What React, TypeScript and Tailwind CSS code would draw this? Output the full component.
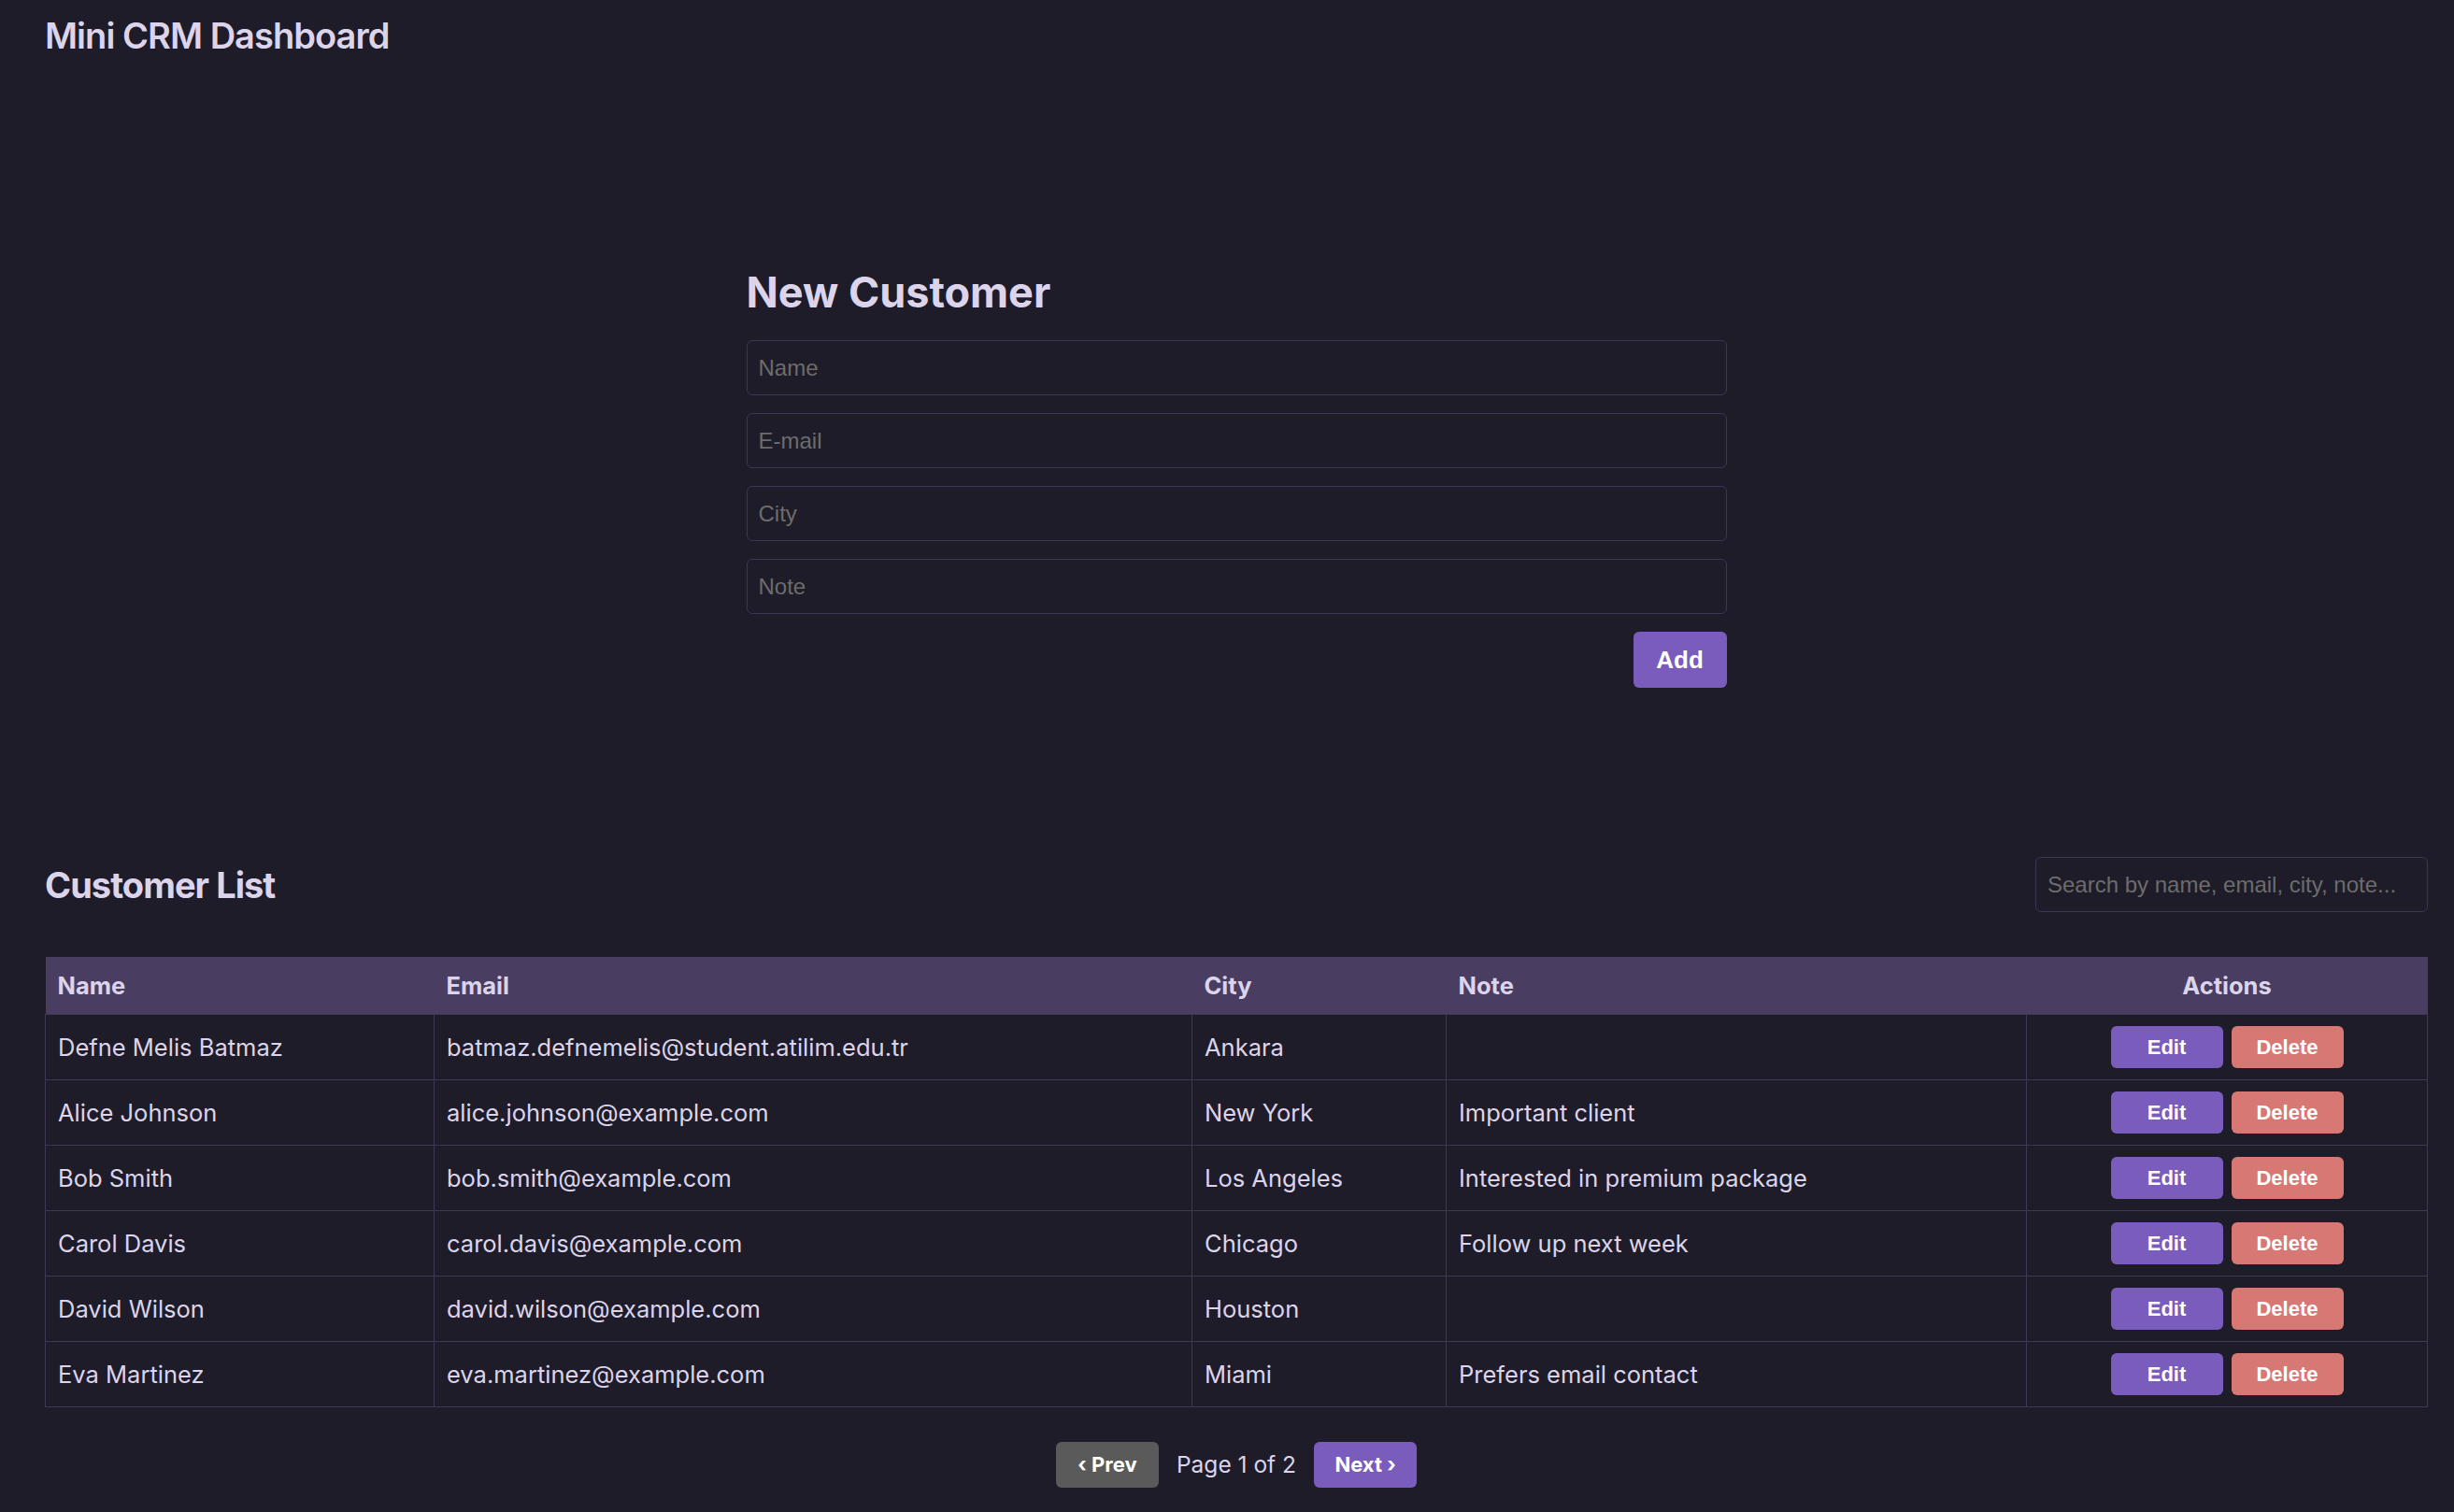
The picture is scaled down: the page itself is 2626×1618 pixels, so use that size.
import { useState } from 'react';

// Mini CRM - form + customer table
type Customer = {
  name: string;
  email: string;
  city: string;
  note: string;
};

const CUSTOMERS: Customer[] = [
  { name: 'Defne Melis Batmaz', email: 'batmaz.defnemelis@student.atilim.edu.tr', city: 'Ankara', note: '' },
  { name: 'Alice Johnson', email: 'alice.johnson@example.com', city: 'New York', note: 'Important client' },
  { name: 'Bob Smith', email: 'bob.smith@example.com', city: 'Los Angeles', note: 'Interested in premium package' },
  { name: 'Carol Davis', email: 'carol.davis@example.com', city: 'Chicago', note: 'Follow up next week' },
  { name: 'David Wilson', email: 'david.wilson@example.com', city: 'Houston', note: '' },
  { name: 'Eva Martinez', email: 'eva.martinez@example.com', city: 'Miami', note: 'Prefers email contact' },
];

const inputCls =
  "h-[59px] w-full rounded-[6px] border border-[#3d3558] bg-[#1e1c29] px-[12px] font-['Liberation_Sans',Arial,sans-serif] text-[24px] text-[#dcd4ea] outline-none placeholder:text-[#6c6c6c]";

export default function App() {
  const [query, setQuery] = useState('');

  return (
    <div className="min-h-screen bg-[#1e1c29] pb-10 pl-12 pr-7 pt-[15px] font-['Inter',sans-serif] text-[#dcd4ea]">
      <h1 className="text-[38px] font-semibold leading-[46px] tracking-[-0.025em]">Mini CRM Dashboard</h1>

      {/* New customer form */}
      <section className="mx-auto mt-[225px] w-[1049px]">
        <h2 className="text-[45px] font-bold leading-[54px]">New Customer</h2>
        <div className="mt-6 flex flex-col gap-[19px]">
          <input className={inputCls} placeholder="Name" />
          <input className={inputCls} placeholder="E-mail" />
          <input className={inputCls} placeholder="City" />
          <input className={inputCls} placeholder="Note" />
        </div>
        <div className="mt-[19px] flex justify-end">
          <button className="h-[60px] w-[100px] rounded-[6px] bg-[#7a5cbd] font-['Liberation_Sans',Arial,sans-serif] text-[26px] font-bold text-white">
            Add
          </button>
        </div>
      </section>

      {/* Customer list */}
      <div className="mt-[181px] flex items-center justify-between">
        <h2 className="text-[38px] font-bold leading-[46px] tracking-[-0.025em]">Customer List</h2>
        <input
          className="h-[59px] w-[420px] rounded-[6px] border border-[#3d3558] bg-[#1e1c29] px-[12px] font-['Liberation_Sans',Arial,sans-serif] text-[24px] text-[#dcd4ea] outline-none placeholder:text-[#6c6c6c]"
          placeholder="Search by name, email, city, note..."
          value={query}
          onChange={(e) => setQuery(e.target.value)}
        />
      </div>

      <table className="mt-12 w-full table-fixed border-collapse text-[25.5px]">
        <colgroup>
          <col className="w-[416px]" />
          <col className="w-[811px]" />
          <col className="w-[272px]" />
          <col className="w-[621px]" />
          <col />
        </colgroup>
        <thead>
          <tr className="h-[61px] bg-[#4a3d62] text-[25.5px] font-semibold">
            <th className="px-[13px] pt-[2px] text-left">Name</th>
            <th className="px-[13px] pt-[2px] text-left">Email</th>
            <th className="px-[13px] pt-[2px] text-left">City</th>
            <th className="px-[13px] pt-[2px] text-left">Note</th>
            <th className="px-[13px] pt-[2px] text-center">Actions</th>
          </tr>
        </thead>
        <tbody>
          {CUSTOMERS.map((c) => (
            <tr key={c.email} className="h-[70px]">
              <td className="border border-[#3f3954] px-[13px] pt-[2px]">{c.name}</td>
              <td className="border border-[#3f3954] px-[13px] pt-[2px]">{c.email}</td>
              <td className="border border-[#3f3954] px-[13px] pt-[2px]">{c.city}</td>
              <td className="border border-[#3f3954] px-[13px] pt-[2px]">{c.note}</td>
              <td className="border border-[#3f3954] px-[13px]">
                <div className="flex justify-center gap-[9px]">
                  <button className="h-[45px] w-[120px] rounded-[6px] bg-[#7a5cbd] font-['Liberation_Sans',Arial,sans-serif] text-[22px] font-bold text-white">
                    Edit
                  </button>
                  <button className="h-[45px] w-[120px] rounded-[6px] bg-[#d77874] font-['Liberation_Sans',Arial,sans-serif] text-[22px] font-bold text-white">
                    Delete
                  </button>
                </div>
              </td>
            </tr>
          ))}
        </tbody>
      </table>

      {/* Pagination */}
      <div className="mt-[37px] flex items-center justify-center gap-[19px]">
        <button className="h-[49px] w-[110px] rounded-[6px] bg-[#5a5a5a] text-[22px] font-bold text-white">‹ Prev</button>
        <span className="text-[24.5px]">Page 1 of 2</span>
        <button className="h-[49px] w-[110px] rounded-[6px] bg-[#7a5cbd] text-[22px] font-bold text-white">Next ›</button>
      </div>
    </div>
  );
}
